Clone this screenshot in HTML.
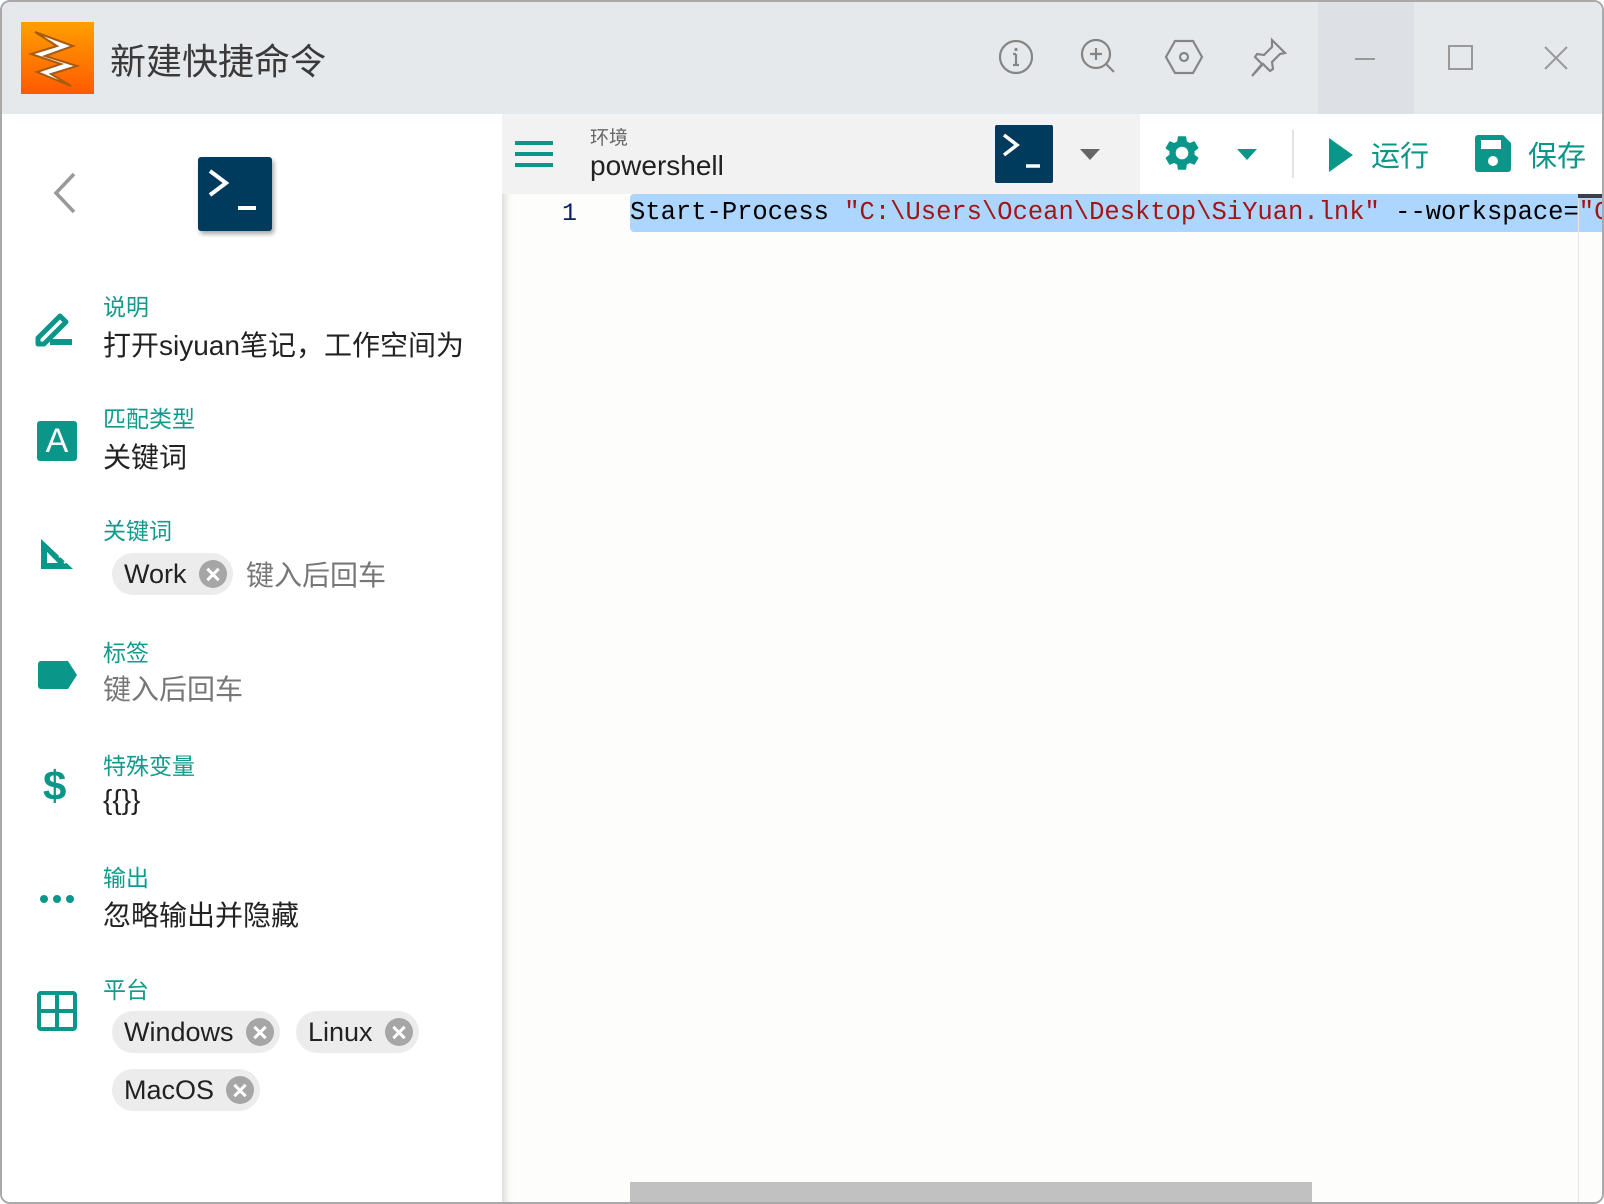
<!DOCTYPE html>
<html><head><meta charset="utf-8">
<style>
*{margin:0;padding:0;box-sizing:border-box}
body{width:1604px;height:1204px;overflow:hidden;background:#fff;font-family:"Liberation Sans","Noto Sans CJK SC",sans-serif;position:relative}
.win{position:absolute;left:0;top:0;width:1604px;height:1204px;border:2px solid #a9a9a9;border-radius:10px;overflow:hidden;background:#fff}
.title{position:absolute;left:0;top:0;width:1604px;height:112px;background:#e6e9ec}
.abs{position:absolute}
.lbl{position:absolute;left:101px;font-size:23px;color:#129a8c;font-family:"Noto Sans CJK SC",sans-serif}
.val{position:absolute;left:101px;font-size:27px;color:#222;font-family:"Liberation Sans","Noto Sans CJK SC",sans-serif}
.chip{position:absolute;height:42px;border-radius:21px;background:#ececec;font-size:27px;color:#222;line-height:42px;padding-left:12px;padding-right:46px}
.chip i{position:absolute;right:6px;top:7px;width:28px;height:28px;border-radius:50%;background:#a6a6a6}
.chip i:before,.chip i:after{content:"";position:absolute;left:6px;top:12.5px;width:16px;height:3px;background:#fff;transform:rotate(45deg)}
.chip i:after{transform:rotate(-45deg)}
.ic{position:absolute;left:34px}
</style></head><body>
<div class="win">
<div class="title">
  <div class="abs" style="left:19px;top:20px;width:73px;height:72px;background:linear-gradient(#ff9f00,#ff5a00)">
    <svg width="73" height="72" viewBox="0 0 73 72"><path d="M14 10 L52 24 L24 34 L56 44 L30 52 L50 64 L16 50 L40 42 L10 32 L36 24 Z" fill="#fff" stroke="#a85a10" stroke-width="2"/></svg>
  </div>
  <div class="abs" style="left:108px;top:35px;font-size:36px;color:#3a3a3a;font-family:'Noto Sans CJK SC',sans-serif;line-height:44px">新建快捷命令</div>
  <svg class="abs" style="left:994px;top:35px" width="40" height="40" viewBox="0 0 40 40" fill="none" stroke="#858585" stroke-width="2.2"><circle cx="20" cy="20" r="16"/><circle cx="20" cy="12.5" r="1.6" fill="#858585" stroke="none"/><path d="M20 17v11M17 28h6M17 17h3"/></svg>
  <svg class="abs" style="left:1077px;top:35px" width="40" height="40" viewBox="0 0 40 40" fill="none" stroke="#858585" stroke-width="2.2"><circle cx="17" cy="17" r="14"/><path d="M27 27l8 8M17 11v12M11 17h12"/></svg>
  <svg class="abs" style="left:1162px;top:35px" width="40" height="40" viewBox="0 0 40 40" fill="none" stroke="#858585" stroke-width="2.2"><path d="M11 4h18l9 16-9 16H11L2 20z"/><circle cx="20" cy="20" r="4"/></svg>
  <svg class="abs" style="left:1246px;top:35px" width="40" height="40" viewBox="0 0 40 40" fill="none" stroke="#858585" stroke-width="2.2"><path d="M24 3l13 13-5 1-8 8 1 7-3 2-7-7-11 12 10-12-7-7 2-3 7 1 8-8z"/></svg>
  <div class="abs" style="left:1316px;top:0;width:96px;height:112px;background:#dde1e6"></div>
  <div class="abs" style="left:1353px;top:56px;width:20px;height:2px;background:#999"></div>
  <div class="abs" style="left:1446px;top:43px;width:25px;height:25px;border:2px solid #999"></div>
  <svg class="abs" style="left:1541px;top:43px" width="26" height="26" viewBox="0 0 26 26" stroke="#999" stroke-width="2"><path d="M2 2l22 22M24 2L2 24"/></svg>
</div>

<div class="abs" style="left:0;top:112px;width:500px;height:1092px;background:#fff"></div>
<svg class="abs" style="left:48px;top:169px" width="30" height="44" viewBox="0 0 30 44" fill="none" stroke="#999" stroke-width="3.5"><path d="M24 3L6 22l18 19"/></svg>
<div class="abs" style="left:196px;top:155px;width:74px;height:74px;background:#003a5c;border-radius:3px;box-shadow:2px 3px 5px rgba(0,0,0,.35)">
  <svg width="74" height="74" viewBox="0 0 74 74" fill="none" stroke="#fff" stroke-width="4"><path d="M12 14l16 12-16 12"/><path d="M40 51h18"/></svg>
</div>

<svg class="ic" style="left:32px;top:306px" width="44" height="40" viewBox="0 0 44 40"><path d="M4 30L26 8l6 6-22 22H4z" fill="none" stroke="#0a9688" stroke-width="5" stroke-linejoin="round"/><rect x="16" y="31" width="22" height="6" fill="#0a9688"/></svg>
<div class="lbl" style="top:286px">说明</div>
<div class="val" style="top:322px;font-size:28px">打开siyuan笔记，工作空间为</div>

<div class="ic" style="left:35px;top:419px;width:40px;height:40px;background:#0a9688;border-radius:3px;color:#fff;font-size:34px;text-align:center;line-height:40px">A</div>
<div class="lbl" style="top:398px">匹配类型</div>
<div class="val" style="top:434px;font-size:28px">关键词</div>

<svg class="ic" style="left:37px;top:535px" width="36" height="34" viewBox="0 0 36 34"><path d="M2 2v30h32z" fill="#0a9688"/><path d="M8 15v11h11z" fill="#fff"/><path d="M10 8l3-2M15 14l3-2M20 20l3-2M25 26l3-2" stroke="#fff" stroke-width="2"/></svg>
<div class="lbl" style="top:510px">关键词</div>
<div class="chip" style="left:110px;top:551px">Work<i></i></div>
<div class="val" style="left:244px;top:552px;color:#777;font-size:28px">键入后回车</div>

<svg class="ic" style="left:36px;top:659px" width="40" height="30" viewBox="0 0 40 30"><path d="M3 0h27l9 14-9 14H3a3 3 0 0 1-3-3V3a3 3 0 0 1 3-3z" fill="#0a9688"/></svg>
<div class="lbl" style="top:632px">标签</div>
<div class="val" style="top:666px;color:#777;font-size:28px">键入后回车</div>

<div class="ic" style="left:41px;top:762px;font-size:42px;font-weight:bold;color:#0a9688;line-height:44px">$</div>
<div class="lbl" style="top:745px">特殊变量</div>
<div class="val" style="top:782px;font-size:28px">{{}}</div>

<svg class="ic" style="left:37px;top:891px" width="36" height="12" viewBox="0 0 36 12" fill="#0a9688"><circle cx="5" cy="6" r="4"/><circle cx="18" cy="6" r="4"/><circle cx="31" cy="6" r="4"/></svg>
<div class="lbl" style="top:857px">输出</div>
<div class="val" style="top:892px;font-size:28px">忽略输出并隐藏</div>

<svg class="ic" style="left:34px;top:988px" width="42" height="42" viewBox="0 0 42 42" fill="none" stroke="#0a9688" stroke-width="4"><rect x="3" y="3" width="36" height="36" rx="2"/><path d="M21 3v36M3 21h36"/></svg>
<div class="lbl" style="top:969px">平台</div>
<div class="chip" style="left:110px;top:1009px">Windows<i></i></div>
<div class="chip" style="left:294px;top:1009px">Linux<i></i></div>
<div class="chip" style="left:110px;top:1067px">MacOS<i></i></div>

<div class="abs" style="left:500px;top:112px;width:1104px;height:1092px;background:#fdfdfc;box-shadow:inset 10px 0 10px -8px rgba(0,0,0,.18)"></div>
<div class="abs" style="left:500px;top:112px;width:638px;height:80px;background:#f2f2f2"></div>
<div class="abs" style="left:1138px;top:112px;width:466px;height:80px;background:#fff"></div>
<svg class="abs" style="left:513px;top:139px" width="38" height="26" viewBox="0 0 38 26" fill="#0a9688"><rect y="0" width="38" height="4"/><rect y="11" width="38" height="4"/><rect y="22" width="38" height="4"/></svg>
<div class="abs" style="left:588px;top:121px;font-size:19px;color:#666;font-family:'Noto Sans CJK SC',sans-serif">环境</div>
<div class="abs" style="left:588px;top:148px;font-size:28px;color:#222">powershell</div>
<div class="abs" style="left:993px;top:123px;width:58px;height:58px;background:#003a5c;border-radius:2px">
  <svg width="58" height="58" viewBox="0 0 58 58" fill="none" stroke="#fff" stroke-width="3.5"><path d="M9 10l13 10-13 10"/><path d="M31 41h14"/></svg>
</div>
<svg class="abs" style="left:1078px;top:147px" width="20" height="12"><path d="M0 0h20L10 11z" fill="#666"/></svg>
<svg class="abs" style="left:1159px;top:130px" width="42" height="42" viewBox="0 0 24 24"><path fill="#0a9688" d="M19.14 12.94c.04-.3.06-.61.06-.94 0-.32-.02-.64-.07-.94l2.03-1.58a.49.49 0 0 0 .12-.61l-1.92-3.32a.49.49 0 0 0-.59-.22l-2.39.96c-.5-.38-1.030-.7-1.62-.94l-.36-2.54a.48.48 0 0 0-.48-.41h-3.84c-.24 0-.43.17-.47.41l-.36 2.54c-.59.24-1.13.57-1.62.94l-2.39-.96a.48.48 0 0 0-.59.22L2.74 8.87c-.12.21-.08.47.12.61l2.03 1.58c-.05.3-.09.63-.09.94s.02.64.07.94l-2.03 1.58a.49.49 0 0 0-.12.61l1.92 3.32c.12.22.37.29.59.22l2.39-.96c.5.38 1.03.7 1.62.94l.36 2.54c.05.24.24.41.48.41h3.84c.24 0 .44-.17.47-.41l.36-2.54c.59-.24 1.13-.56 1.62-.94l2.39.96c.22.08.47 0 .59-.22l1.92-3.32c.12-.22.07-.47-.12-.61l-2.01-1.580zM12 15.6A3.6 3.6 0 1 1 12 8.4a3.6 3.6 0 0 1 0 7.2z"/></svg>
<svg class="abs" style="left:1235px;top:147px" width="20" height="12"><path d="M0 0h20L10 11z" fill="#0a9688"/></svg>
<div class="abs" style="left:1290px;top:128px;width:2px;height:48px;background:#e3e3e3"></div>
<svg class="abs" style="left:1327px;top:136px" width="24" height="34"><path d="M0 0l24 17L0 34z" fill="#0a9688"/></svg>
<div class="abs" style="left:1369px;top:131px;font-size:29px;color:#0a9688;font-family:'Noto Sans CJK SC',sans-serif">运行</div>
<svg class="abs" style="left:1473px;top:133px" width="36" height="37" viewBox="0 0 36 37"><path d="M3 0h25l8 8v26a3 3 0 0 1-3 3H3a3 3 0 0 1-3-3V3a3 3 0 0 1 3-3z" fill="#0a9688"/><rect x="6" y="5" width="20" height="9" fill="#fff"/><circle cx="18" cy="26" r="5" fill="#fff"/></svg>
<div class="abs" style="left:1526px;top:131px;font-size:29px;color:#0a9688;font-family:'Noto Sans CJK SC',sans-serif">保存</div>

<div class="abs" style="left:560px;top:197px;font-size:25px;color:#0d1a6e;font-family:'Liberation Mono',monospace">1</div>
<div class="abs" style="left:628px;top:192px;width:976px;height:38px;background:#add6ff;border-radius:4px 0 0 4px"></div>
<div class="abs" style="left:628px;top:194px;font-size:25.5px;color:#000;font-family:'Liberation Mono',monospace;white-space:pre;line-height:34px">Start-Process <span style="color:#a31515">"C:\Users\Ocean\Desktop\SiYuan.lnk"</span> --workspace=<span style="color:#a31515">"C</span></div>
<div class="abs" style="left:1576px;top:192px;width:1px;height:1012px;background:#e5e5e5"></div>
<div class="abs" style="left:1576px;top:192px;width:28px;height:4px;background:#3a3f48"></div>
<div class="abs" style="left:628px;top:1180px;width:682px;height:24px;background:#c1c1c1"></div>
</div>
</body></html>
